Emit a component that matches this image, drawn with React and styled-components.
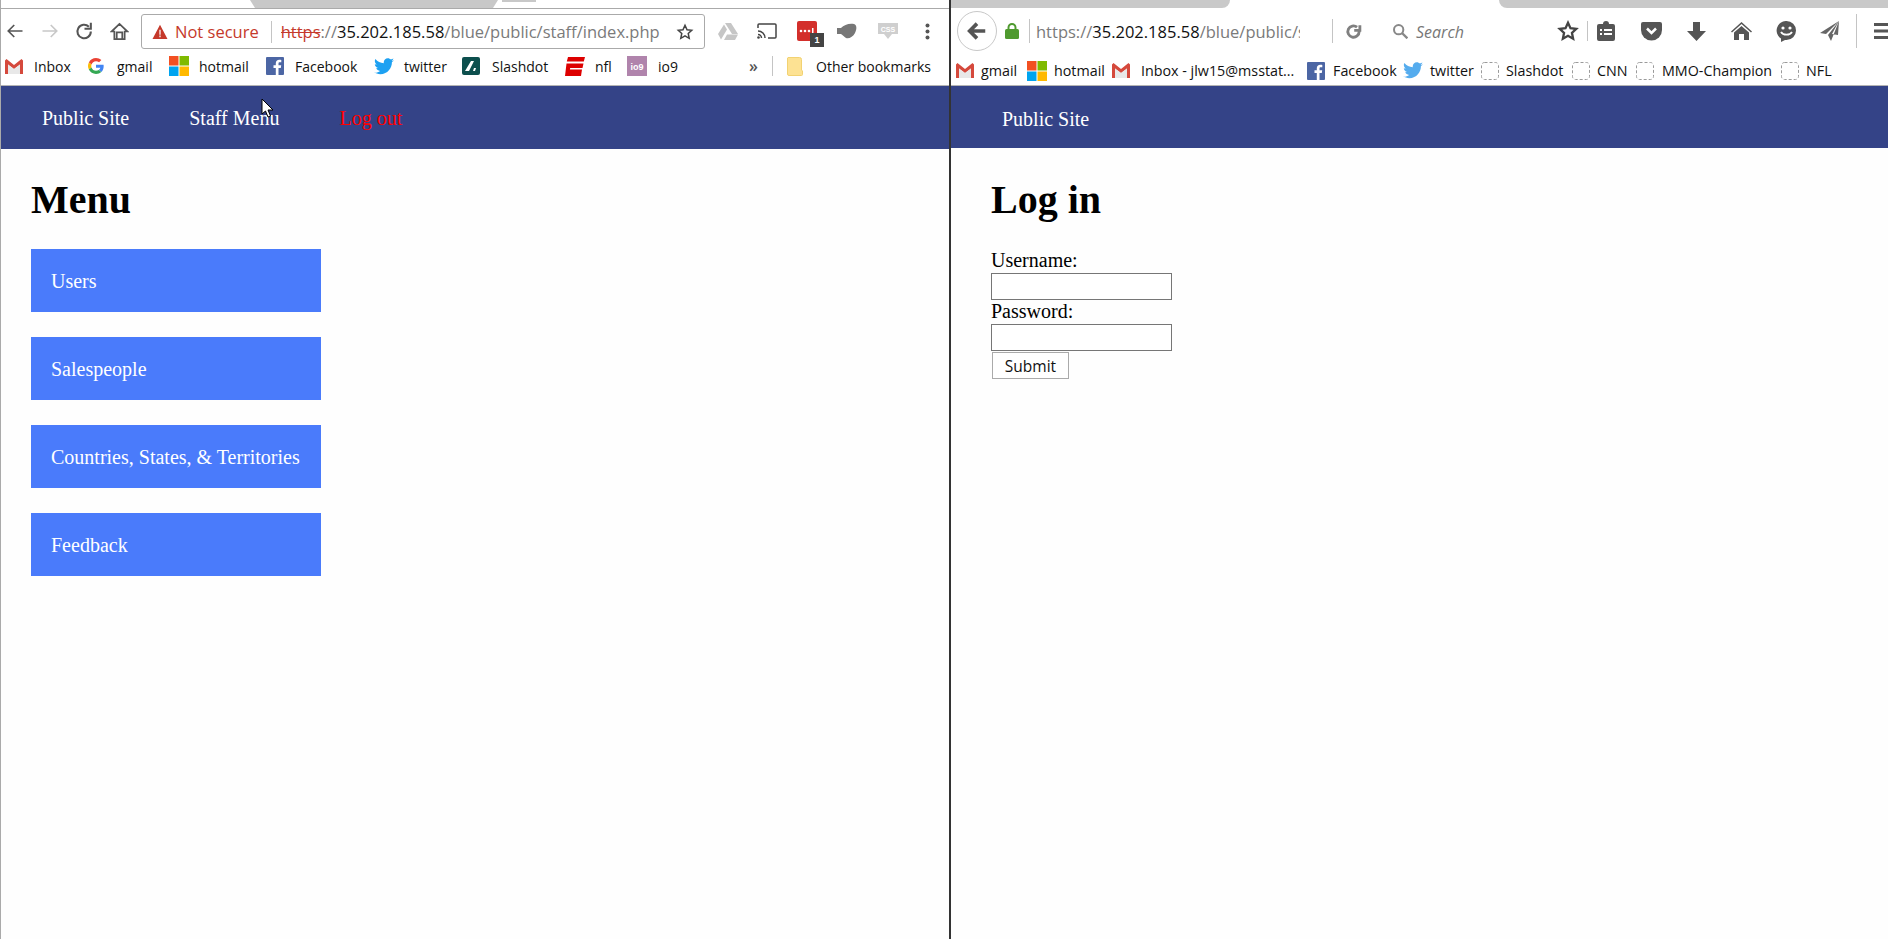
import React from "react";
import styled, { createGlobalStyle } from "styled-components";

const UI = `"Open Sans", "Noto Sans", "Liberation Sans", sans-serif`;

const Global = createGlobalStyle`
  html, body { margin: 0; padding: 0; background: #fff; }
  body { font-family: "Liberation Serif", "Times New Roman", serif; font-size: 20px; color: #000; overflow: hidden; }
  * { box-sizing: border-box; }
  svg { flex: none; }
`;

const Screen = styled.div`
  position: relative;
  display: flex;
  width: 1888px;
  height: 939px;
  overflow: hidden;
  background: #fefefe;
`;
const ChromeWindow = styled.section`
  width: 949px;
  flex: none;
  display: flex;
  flex-direction: column;
  border-left: 1px solid #aaa;
`;
const Divider = styled.div`
  width: 2px;
  flex: none;
  background: #333;
`;
const FirefoxWindow = styled.section`
  flex: 1;
  min-width: 0;
  display: flex;
  flex-direction: column;
`;

const ChromeTabs = styled.div`
  height: 9px;
  flex: none;
  display: flex;
  align-items: flex-start;
  padding-left: 249px;
  background: #fff;
  border-bottom: 1px solid #aaa;
`;
const ChromeTab = styled.div`
  width: ${(p) => p.$w}px;
  height: ${(p) => p.$h}px;
  margin-left: ${(p) => p.$ml || 0}px;
  background: #c8c8c8;
  clip-path: polygon(0 0, 100% 0, ${(p) => (p.$flat ? "100%" : "calc(100% - 5px)")} 100%, ${(p) => (p.$flat ? "0" : "5px")} 100%);
`;
const FoxTabs = styled.div`
  height: 8px;
  flex: none;
  display: flex;
  justify-content: space-between;
  background: #fff;
`;
const FoxTab = styled.div`
  height: 8px;
  width: ${(p) => p.$w}px;
  background: #c9c9c9;
  border-bottom-${(p) => p.$side}-radius: 8px;
`;

const Toolbar = styled.div`
  height: 41px;
  flex: none;
  display: flex;
  align-items: center;
  background: #fff;
  padding-top: 3px;
  padding-left: ${(p) => p.$pad || 0}px;
`;
const FoxToolbar = styled(Toolbar)`
  height: 44px;
  padding-top: 2px;
`;
const Slot = styled.span`
  display: flex;
  align-items: center;
  justify-content: center;
  flex: none;
  position: relative;
  width: ${(p) => p.$w}px;
  margin-left: ${(p) => p.$ml || 0}px;
`;
const Omnibox = styled.div`
  width: 564px;
  height: 35px;
  flex: none;
  margin-left: 13px;
  margin-top: 1px;
  display: flex;
  align-items: center;
  border: 1px solid #aaa;
  border-radius: 3px;
  padding-left: 10px;
  font-family: ${UI};
  font-size: 16.5px;
  white-space: nowrap;
`;
const NotSecure = styled.span`
  color: #c5392b;
  margin-left: 7px;
`;
const Sep = styled.span`
  width: 1px;
  height: ${(p) => p.$h || 22}px;
  flex: none;
  background: #c4c4c4;
  margin-left: ${(p) => p.$ml || 0}px;
`;
const Url = styled.span`
  color: #7a7a7a;
  margin-left: ${(p) => p.$ml || 9}px;
  width: ${(p) => p.$w}px;
  overflow: hidden;
  flex: none;
  white-space: nowrap;
  b { font-weight: 400; color: #111; }
  s { color: #c5392b; text-decoration-thickness: 1px; }
`;
const Badge = styled.span`
  position: absolute;
  right: -7px;
  bottom: -6px;
  width: 14px;
  height: 14px;
  background: #444;
  color: #fff;
  font: 700 9px "Liberation Sans", sans-serif;
  display: flex;
  align-items: center;
  justify-content: center;
`;
const FoxBack = styled.span`
  width: 40px;
  height: 40px;
  flex: none;
  margin-left: 6px;
  border: 1px solid #c8c8c8;
  border-radius: 50%;
  display: flex;
  align-items: center;
  justify-content: center;
`;
const FoxUrl = styled(Url)`
  font-family: ${UI};
  font-size: 16.5px;
`;
const SearchText = styled.span`
  font-family: ${UI};
  font-style: italic;
  font-size: 16px;
  color: #777;
  margin-left: 8px;
  padding-top: 1px;
  width: 141px;
  flex: none;
`;

const Bookmarks = styled.div`
  height: 36px;
  flex: none;
  display: flex;
  align-items: center;
  background: #fff;
  border-bottom: 1px solid #b4b4b4;
  padding-bottom: 3px;
  font-family: ${UI};
  font-size: 14px;
  color: #111;
  white-space: nowrap;
`;
const FoxBookmarks = styled(Bookmarks)`
  height: 34px;
  padding-top: 4px;
  padding-bottom: 0;
  font-size: 14.3px;
`;
const Mark = styled.span`
  display: flex;
  align-items: center;
  flex: none;
  width: ${(p) => p.$w}px;
  margin-left: ${(p) => p.$ml || 0}px;
  gap: ${(p) => p.$gap}px;
`;
const Chevrons = styled.span`
  margin-left: 71px;
  width: 23px;
  flex: none;
  font-size: 16px;
  font-weight: 600;
  color: #555;
`;

const Nav = styled.nav`
  height: ${(p) => p.$h}px;
  flex: none;
  display: flex;
  align-items: center;
  gap: 60px;
  padding-left: ${(p) => p.$pad}px;
  padding-top: ${(p) => p.$top}px;
  background: #344387;
`;
const NavLink = styled.a`
  color: ${(p) => (p.$danger ? "#ff0000" : "#fff")};
`;
const Content = styled.main`
  flex: 1;
  padding: ${(p) => p.$top || 0}px 0 0 ${(p) => p.$pad}px;
`;
const Title = styled.h1`
  margin: 28px 0 26px;
  font-size: 40px;
  line-height: 46px;
  font-weight: 700;
`;
const MenuList = styled.div`
  display: flex;
  flex-direction: column;
  gap: 25px;
`;
const MenuCard = styled.a`
  width: 290px;
  height: 63px;
  display: flex;
  align-items: center;
  padding: 1px 0 0 20px;
  background: #4a7bfb;
  color: #fff;
`;
const LoginForm = styled.form`
  display: flex;
  flex-direction: column;
  align-items: flex-start;
`;
const Label = styled.label`
  line-height: 23px;
  height: 23px;
`;
const Field = styled.input`
  width: 181px;
  height: 27px;
  margin-top: 1px;
  border: 1px solid #767676;
  background: #fff;
  padding: 0;
  display: block;
`;
const Submit = styled.button`
  width: 77px;
  height: 27px;
  margin: 1px 0 0 1px;
  padding: 0;
  border: 1px solid #aaa;
  background: #fff;
  font-family: ${UI};
  font-size: 15.5px;
  color: #111;
`;
const Cursor = styled.svg`
  position: absolute;
  left: 261px;
  top: 98px;
`;

const Ic = ({ w = 20, h = 20, vb = "0 0 24 24", children }) => (
  <svg width={w} height={h} viewBox={vb}>{children}</svg>
);

const Gmail = ({ w = 18 }) => (
  <Ic w={w} h={15} vb="0 0 18 15">
    <path d="M0 1.5 1.5 0 9 6l7.500-6L18 1.500V15h-3V5.500L9 10 3 5.500V15H0z" fill="#d5493c" />
    <path d="M3 5.500 9 10l6-4.500V15H3z" fill="#e8e8e8" />
  </Ic>
);
const Google = () => (
  <Ic w={16} h={16} vb="0 0 48 48">
    <path fill="#ea4335" d="M24 9.500c3.500 0 6.700 1.300 9.200 3.500l6.900-6.900C35.900 2.400 30.300 0 24 0 14.600 0 6.500 5.400 2.600 13.200l8 6.200C12.400 13.600 17.700 9.500 24 9.500z" />
    <path fill="#4285f4" d="M47 24.500c0-1.600-.1-3.100-.4-4.500H24v9h13c-.6 3-2.200 5.500-4.800 7.200l7.700 6C44.400 38 47 31.800 47 24.500z" />
    <path fill="#fbbc05" d="M10.500 28.600C10 27.200 9.800 25.600 9.800 24s.3-3.200.8-4.600l-8-6.200C.9 16.500 0 20.100 0 24s.9 7.500 2.600 10.800z" />
    <path fill="#34a853" d="M24 48c6.500 0 11.900-2.100 15.900-5.800l-7.700-6c-2.200 1.500-4.900 2.300-8.200 2.300-6.300 0-11.600-4.100-13.500-9.900l-8 6.200C6.500 42.600 14.600 48 24 48z" />
  </Ic>
);
const Windows = () => (
  <Ic w={20} h={20} vb="0 0 20 20">
    <rect width="9.500" height="9.500" fill="#f25022" />
    <rect x="10.500" width="9.500" height="9.500" fill="#7fba00" />
    <rect y="10.500" width="9.500" height="9.500" fill="#00a4ef" />
    <rect x="10.500" y="10.500" width="9.500" height="9.500" fill="#ffb900" />
  </Ic>
);
const Fb = () => (
  <Ic w={18} h={18} vb="0 0 18 18">
    <rect width="18" height="18" rx="1" fill="#4c66a4" />
    <path d="M12.500 18v-7h2.300l.4-2.700h-2.700V6.600c0-.8.300-1.300 1.400-1.300h1.400V2.900c-.3 0-1.100-.1-2-.1-2.100 0-3.500 1.200-3.500 3.500v2H7.500V11h2.300v7z" fill="#fff" />
  </Ic>
);
const Bird = ({ c = "#1da1f2" }) => (
  <Ic w={20} h={17} vb="0 0 24 20">
    <path fill={c} d="M24 2.400c-.9.400-1.800.7-2.800.8 1-.6 1.800-1.600 2.200-2.700-1 .6-2 1-3.100 1.200C19.300.7 18 0 16.600 0c-2.700 0-4.900 2.200-4.900 4.900 0 .4 0 .8.100 1.100C7.700 5.800 4.100 3.900 1.700.9 1.200 1.600 1 2.500 1 3.400c0 1.700.9 3.200 2.200 4.100-.8 0-1.600-.2-2.200-.6v.1c0 2.400 1.700 4.400 3.900 4.800-.4.100-.8.200-1.300.2-.3 0-.6 0-.9-.1.600 2 2.400 3.400 4.600 3.400-1.700 1.300-3.800 2.100-6.100 2.100-.4 0-.8 0-1.200-.1C2.200 18.300 4.800 19.200 7.500 19.200c9.100 0 14-7.500 14-14v-.6c1-.7 1.800-1.500 2.500-2.200z" />
  </Ic>
);
const SlashIcon = () => (
  <Ic w={18} h={18} vb="0 0 18 18">
    <rect width="18" height="18" rx="2" fill="#0c4f4d" />
    <path d="M3 14 9 4h3l-5 10zM11 14l1-3h2l-1 3z" fill="#fff" />
  </Ic>
);
const Espn = () => (
  <Ic w={20} h={19} vb="0 0 20 19">
    <path fill="#d00" d="M3 0h17l-1.200 4.500H1.800zM1.500 6.500h17L17.500 11H5.200l-.3 1.500H17L16 19H0z" />
  </Ic>
);
const Io9 = () => (
  <Ic w={20} h={20} vb="0 0 20 20">
    <rect width="20" height="20" fill="#b084ac" />
    <text x="10" y="13.500" textAnchor="middle" fontFamily="Liberation Sans" fontWeight="700" fontSize="9" fill="#fff">io9</text>
  </Ic>
);
const Folder = () => (
  <Ic w={16} h={19} vb="0 0 16 19">
    <path d="M1 .5h11.500a2 2 0 0 1 2 2V13l1 1v3.500a1 1 0 0 1-1 1H2a1.500 1.500 0 0 1-1.500-1.500V1z" fill="#fde293" stroke="#f2d272" />
  </Ic>
);
const Dashed = () => (
  <Ic w={18} h={18} vb="0 0 18 18">
    <rect x=".5" y=".5" width="17" height="17" rx="3" fill="none" stroke="#9a9a9a" strokeDasharray="3 2" />
  </Ic>
);

const chromeMarks = [
  { icon: <Gmail />, label: "Inbox", w: 65, ml: 4, gap: 11 },
  { icon: <Google />, label: "gmail", w: 64, ml: 18, gap: 13 },
  { icon: <Windows />, label: "hotmail", w: 79, ml: 17, gap: 10 },
  { icon: <Fb />, label: "Facebook", w: 92, ml: 18, gap: 11 },
  { icon: <Bird />, label: "twitter", w: 72, ml: 16, gap: 10 },
  { icon: <SlashIcon />, label: "Slashdot", w: 87, ml: 16, gap: 12 },
  { icon: <Espn />, label: "nfl", w: 46, ml: 16, gap: 10 },
  { icon: <Io9 />, label: "io9", w: 51, ml: 16, gap: 11 },
];
const foxMarks = [
  { icon: <Gmail />, label: "gmail", w: 62, ml: 5, gap: 7 },
  { icon: <Windows />, label: "hotmail", w: 76, ml: 9, gap: 7 },
  { icon: <Gmail w={20} />, label: "Inbox - jlw15@msstat...", w: 184, ml: 8, gap: 10 },
  { icon: <Fb />, label: "Facebook", w: 89, ml: 12, gap: 8 },
  { icon: <Bird c="#55acee" />, label: "twitter", w: 68, ml: 7, gap: 7 },
  { icon: <Dashed />, label: "Slashdot", w: 82, ml: 10, gap: 7 },
  { icon: <Dashed />, label: "CNN", w: 55, ml: 9, gap: 7 },
  { icon: <Dashed />, label: "MMO-Champion", w: 137, ml: 9, gap: 8 },
  { icon: <Dashed />, label: "NFL", w: 50, ml: 8, gap: 7 },
];
const menuItems = ["Users", "Salespeople", "Countries, States, & Territories", "Feedback"];

function App() {
  return (
    <Screen>
      <Global />
      <ChromeWindow>
        <ChromeTabs>
          <ChromeTab $w={248} $h={8} />
          <ChromeTab $w={34} $h={2} $ml={4} $flat />
        </ChromeTabs>
        <Toolbar $pad={5}>
          <Slot $w={18}>
            <Ic w={18} h={18}><path d="M22 12H4M11 4l-8 8 8 8" fill="none" stroke="#555" strokeWidth="2.200" /></Ic>
          </Slot>
          <Slot $w={18} $ml={17}>
            <Ic w={18} h={18}><path d="M2 12h18M13 4l8 8-8 8" fill="none" stroke="#c8c8c8" strokeWidth="2.200" /></Ic>
          </Slot>
          <Slot $w={18} $ml={16}>
            <Ic w={19} h={19}><path d="M20 12a8.500 8.500 0 1 1-2.500-6M20 1v7.500h-8" fill="none" stroke="#555" strokeWidth="2.600" /></Ic>
          </Slot>
          <Slot $w={18} $ml={17}>
            <Ic w={19} h={19}><path d="M12 2.500 2 12h3.500v9.500h13V12H22zM8.500 21v-8h7v8" fill="none" stroke="#555" strokeWidth="2.200" /></Ic>
          </Slot>
          <Omnibox>
            <Ic w={16} h={15}><path d="M12 1 0 24h24zM11 9h2v8h-2zm0 9.500h2v2.500h-2z" fill="#c5392b" fillRule="evenodd" /></Ic>
            <NotSecure>Not secure</NotSecure>
            <Sep $ml={12} />
            <Url $w={390}><s>https</s>://<b>35.202.185.58</b>/blue/public/staff/index.php</Url>
            <Slot $w={20} $ml={4}>
              <Ic w={18} h={18}><path d="m12 3 2.700 6 6.300.7-4.700 4.300 1.300 6.400-5.600-3.200-5.600 3.200 1.300-6.400L3 9.700 9.300 9z" fill="none" stroke="#444" strokeWidth="2" /></Ic>
            </Slot>
          </Omnibox>
          <Slot $w={20} $ml={13}>
            <Ic w={20} h={17} vb="0 0 20 17"><path d="M7 0h6l7 11h-6zM6 1.500l3 5-6 10-3-5.500zM6 17l3-5.500h11L17 17z" fill="#c6c6c6" /></Ic>
          </Slot>
          <Slot $w={20} $ml={19}>
            <Ic w={20} h={16} vb="0 0 20 16"><path d="M1 5V2a1 1 0 0 1 1-1h16a1 1 0 0 1 1 1v12a1 1 0 0 1-1 1h-7" fill="none" stroke="#444" strokeWidth="1.500" /><path d="M1 8a7 7 0 0 1 7 7M1 11.500A3.500 3.500 0 0 1 4.500 15" fill="none" stroke="#444" strokeWidth="1.500" /><circle cx="1.500" cy="14.500" r="1.300" fill="#444" /></Ic>
          </Slot>
          <Slot $w={20} $ml={20}>
            <Ic w={20} h={20} vb="0 0 20 20"><rect width="20" height="20" rx="2" fill="#d32f2b" /><circle cx="4" cy="10" r="1.300" fill="#fff" /><circle cx="8" cy="10" r="1.300" fill="#fff" /><circle cx="12" cy="10" r="1.300" fill="#fff" /><rect x="15" y="7" width="1.500" height="6" fill="#fff" /></Ic>
            <Badge>1</Badge>
          </Slot>
          <Slot $w={20} $ml={20}>
            <Ic w={20} h={16} vb="0 0 20 16"><path d="M0 5h4c3-3 8-5 13-4 3 1 3 5 1 9-2 4-6 6-9 5-2-1-3-3-5-4H0z" fill="#777" /></Ic>
          </Slot>
          <Slot $w={20} $ml={21}>
            <Ic w={20} h={17} vb="0 0 20 17"><path d="M0 0h20v11h-6l-4 5-4-5H0z" fill="#cfcfcf" /><text x="10" y="8.500" textAnchor="middle" fontFamily="Liberation Sans" fontWeight="700" fontSize="7" fill="#fff">CSS</text></Ic>
          </Slot>
          <Slot $w={6} $ml={26}>
            <Ic w={5} h={17} vb="0 0 5 17"><circle cx="2.500" cy="2.500" r="2" fill="#555" /><circle cx="2.500" cy="8.500" r="2" fill="#555" /><circle cx="2.500" cy="14.500" r="2" fill="#555" /></Ic>
          </Slot>
        </Toolbar>
        <Bookmarks>
          {chromeMarks.map((m) => (
            <Mark key={m.label} $w={m.w} $ml={m.ml} $gap={m.gap}>{m.icon}{m.label}</Mark>
          ))}
          <Chevrons>»</Chevrons>
          <Sep $h={20} />
          <Mark $w={143} $ml={14} $gap={13}><Folder />Other bookmarks</Mark>
        </Bookmarks>
        <Nav $pad={41} $h={63} $top={1}>
          <NavLink>Public Site</NavLink>
          <NavLink>Staff Menu</NavLink>
          <NavLink $danger>Log out</NavLink>
        </Nav>
        <Content $pad={30}>
          <Title>Menu</Title>
          <MenuList>
            {menuItems.map((item) => <MenuCard key={item}>{item}</MenuCard>)}
          </MenuList>
        </Content>
      </ChromeWindow>
      <Divider />
      <FirefoxWindow>
        <FoxTabs>
          <FoxTab $w={279} $side="right" />
          <FoxTab $w={389} $side="left" />
        </FoxTabs>
        <FoxToolbar>
          <FoxBack>
            <Ic w={22} h={22}><path d="M21 12H6M12 4l-8 8 8 8" fill="none" stroke="#555" strokeWidth="4" /></Ic>
          </FoxBack>
          <Slot $w={14} $ml={8}>
            <Ic w={14} h={16} vb="0 0 14 16"><rect y="6" width="14" height="10" rx="1.500" fill="#4f9a2f" /><path d="M3.500 7V4.500a3.500 3.500 0 0 1 7 0V7" fill="none" stroke="#4f9a2f" strokeWidth="2" /></Ic>
          </Slot>
          <Sep $h={24} $ml={10} />
          <FoxUrl $w={264} $ml={6}>https://<b>35.202.185.58</b>/blue/public/staff/index.php</FoxUrl>
          <Sep $h={24} $ml={32} />
          <Slot $w={14} $ml={13}>
            <Ic w={17} h={17}><path d="M20 12a8 8 0 1 1-3-6.200M21 3v7.500h-8" fill="none" stroke="#808080" strokeWidth="4" /></Ic>
          </Slot>
          <Slot $w={16} $ml={32}>
            <Ic w={16} h={16}><circle cx="10" cy="10" r="7" fill="none" stroke="#888" strokeWidth="3" /><path d="m15 15 8 8" stroke="#888" strokeWidth="3.500" /></Ic>
          </Slot>
          <SearchText>Search</SearchText>
          <Slot $w={21}>
            <Ic w={22} h={22}><path d="m12 3 2.700 6 6.300.7-4.700 4.300 1.300 6.400-5.600-3.200-5.600 3.200 1.300-6.400L3 9.700 9.300 9z" fill="none" stroke="#444" strokeWidth="2.500" /></Ic>
          </Slot>
          <Sep $h={20} $ml={9} />
          <Slot $w={18} $ml={9}>
            <Ic w={18} h={20} vb="0 0 18 20"><path d="M2 3h4a3 3 0 0 1 6 0h4a2 2 0 0 1 2 2v13a2 2 0 0 1-2 2H2a2 2 0 0 1-2-2V5a2 2 0 0 1 2-2z" fill="#555" /><path d="M3 8h2v2H3zm4 0h8v2H7zm-4 4h2v2H3zm4 0h8v2H7z" fill="#fff" /></Ic>
          </Slot>
          <Slot $w={21} $ml={26}>
            <Ic w={21} h={19} vb="0 0 21 19"><path d="M2 0h17a2 2 0 0 1 2 2v6a10.500 10.500 0 0 1-21 0V2a2 2 0 0 1 2-2z" fill="#555" /><path d="m6 6.500 4.500 4.500L15 6.500" fill="none" stroke="#fff" strokeWidth="2.500" /></Ic>
          </Slot>
          <Slot $w={19} $ml={25}>
            <Ic w={19} h={19} vb="0 0 19 19"><path d="M6 0h7v9h6l-9.500 10L0 9h6z" fill="#555" /></Ic>
          </Slot>
          <Slot $w={21} $ml={25}>
            <Ic w={21} h={18} vb="0 0 21 18"><path d="M10.500 0 21 9.500l-1 1L10.500 2 1 10.500l-1-1z" fill="#555" /><path d="M10.500 4 18 10.500V18h-5v-6H8v6H3v-7.500z" fill="#555" /></Ic>
          </Slot>
          <Slot $w={21} $ml={24}>
            <Ic w={21} h={21} vb="0 0 21 21"><path d="M10.500 0a9.500 9.500 0 0 1 0 19H9l-4 2v-3.500A9.500 9.500 0 0 1 10.500 0z" fill="#555" /><circle cx="7" cy="7" r="1.600" fill="#fff" /><circle cx="14" cy="7" r="1.600" fill="#fff" /><path d="M5 11c2 3.500 9 3.500 11 0" fill="none" stroke="#fff" strokeWidth="1.800" /></Ic>
          </Slot>
          <Slot $w={19} $ml={23}>
            <Ic w={19} h={20} vb="0 0 19 20"><path d="M19 0 0 12l6 1zM19 0 8 14l3 6zM19 0l-1 14-6-1z" fill="#666" /></Ic>
          </Slot>
          <Sep $h={34} $ml={17} />
          <Slot $w={16} $ml={16}>
            <Ic w={16} h={16} vb="0 0 16 16"><path d="M1 0h15v3H1zM1 6.500h15v3H1zM1 13h15v3H1z" fill="#555" /></Ic>
          </Slot>
        </FoxToolbar>
        <FoxBookmarks>
          {foxMarks.map((m) => (
            <Mark key={m.label} $w={m.w} $ml={m.ml} $gap={m.gap}>{m.icon}{m.label}</Mark>
          ))}
        </FoxBookmarks>
        <Nav $pad={51} $h={62} $top={4}>
          <NavLink>Public Site</NavLink>
        </Nav>
        <Content $pad={40} $top={1}>
          <Title>Log in</Title>
          <LoginForm>
            <Label>Username:</Label>
            <Field type="text" />
            <Label>Password:</Label>
            <Field type="password" />
            <Submit type="button">Submit</Submit>
          </LoginForm>
        </Content>
      </FirefoxWindow>
      <Cursor width="14" height="20" viewBox="0 0 14 20">
        <path d="M1 1v15l3.500-3 2.500 6 2.500-1-2.500-6H12z" fill="#fff" stroke="#000" />
      </Cursor>
    </Screen>
  );
}

export default App;
